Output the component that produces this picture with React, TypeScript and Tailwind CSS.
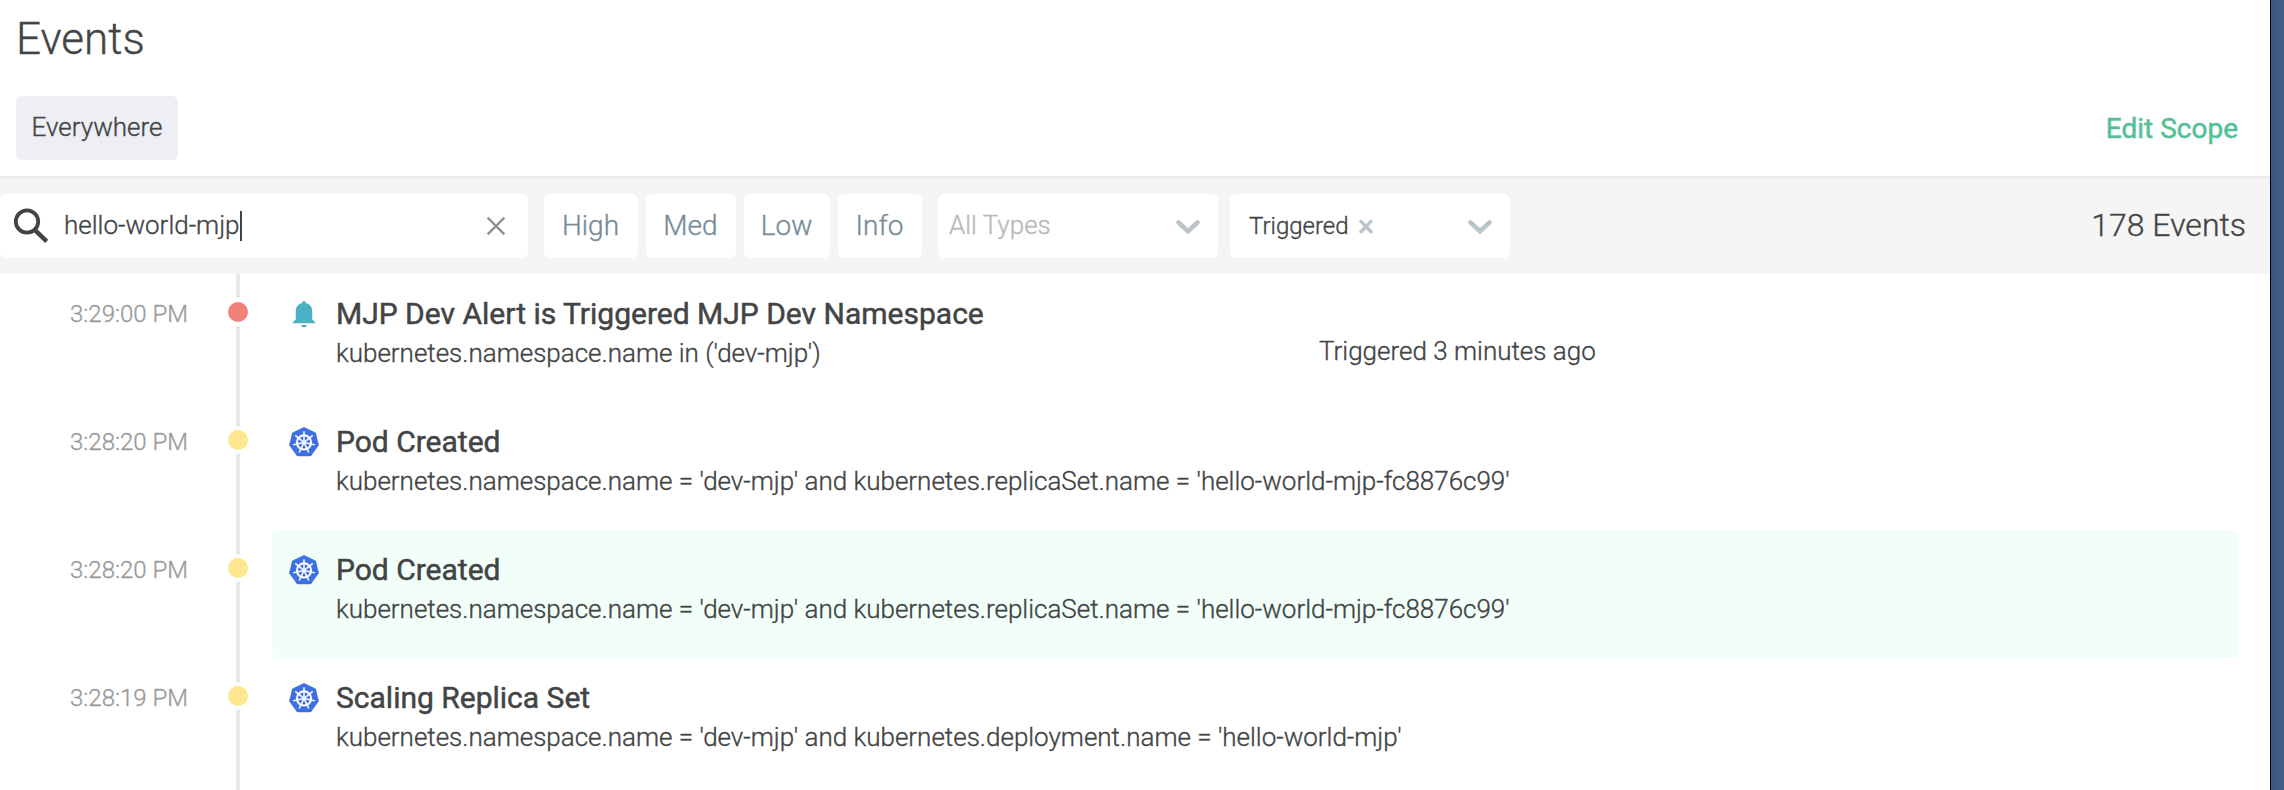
type Severity = "high" | "low";

interface EventItem {
  time: string;
  severity: Severity;
  kind: "alert" | "kubernetes";
  title: string;
  scope: string;
  status?: string;
  highlighted?: boolean;
}

const events: EventItem[] = [
  {
    time: "3:29:00 PM",
    severity: "high",
    kind: "alert",
    title: "MJP Dev Alert is Triggered MJP Dev Namespace",
    scope: "kubernetes.namespace.name in ('dev-mjp')",
    status: "Triggered 3 minutes ago",
  },
  {
    time: "3:28:20 PM",
    severity: "low",
    kind: "kubernetes",
    title: "Pod Created",
    scope:
      "kubernetes.namespace.name = 'dev-mjp' and kubernetes.replicaSet.name = 'hello-world-mjp-fc8876c99'",
  },
  {
    time: "3:28:20 PM",
    severity: "low",
    kind: "kubernetes",
    title: "Pod Created",
    scope:
      "kubernetes.namespace.name = 'dev-mjp' and kubernetes.replicaSet.name = 'hello-world-mjp-fc8876c99'",
    highlighted: true,
  },
  {
    time: "3:28:19 PM",
    severity: "low",
    kind: "kubernetes",
    title: "Scaling Replica Set",
    scope:
      "kubernetes.namespace.name = 'dev-mjp' and kubernetes.deployment.name = 'hello-world-mjp'",
  },
];

const severityFilters = [
  { label: "High", width: "w-[94px]" },
  { label: "Med", width: "w-[90px]" },
  { label: "Low", width: "w-[86px]" },
  { label: "Info", width: "w-[84px]" },
];

function SearchIcon() {
  return (
    <svg className="ml-[13px] size-9 shrink-0" viewBox="0 0 36 36" fill="none" stroke="#424445">
      <circle cx="14" cy="13.5" r="11.2" strokeWidth="3.8" />
      <path d="M22.3 22.3 33.7 33.4" strokeWidth="4.4" />
    </svg>
  );
}

function ClearIcon() {
  return (
    <svg className="mr-[22px] size-5 shrink-0" viewBox="0 0 20 20" fill="none" stroke="#8f9191">
      <path d="M1.6 1.6 18.4 18.4M18.4 1.6 1.6 18.4" strokeWidth="2.3" />
    </svg>
  );
}

function RemoveIcon() {
  return (
    <svg className="ml-[10px] mt-px h-[15px] w-[14px]" viewBox="0 0 14 15" fill="none" stroke="#b9c5cb">
      <path d="M2 2.4 12 12.8M12 2.4 2 12.8" strokeWidth="3.4" strokeLinecap="round" />
    </svg>
  );
}

function ChevronIcon() {
  return (
    <svg className="mr-[18px] mt-[2px] h-[14px] w-6 shrink-0" viewBox="0 0 24 14" fill="none" stroke="#b9c5cb">
      <path d="M2.5 2.5 12 11.2 21.5 2.5" strokeWidth="4.6" strokeLinecap="round" />
    </svg>
  );
}

function BellIcon() {
  return (
    <svg className="mt-[7px] h-[27px] w-6" viewBox="0 0 24 27" fill="#4db1c6">
      <path d="M12 0c1.1 0 1.7.8 1.8 1.9 3.8.8 6.4 3.8 6.4 8v8.3l2.9 3v1H.9v-1l2.9-3V9.9c0-4.2 2.6-7.2 6.4-8C10.3.8 10.9 0 12 0Z" />
      <path d="M9.2 23.9h5.6c-.2 1.5-1.3 2.4-2.8 2.4s-2.6-.9-2.8-2.4Z" />
    </svg>
  );
}

function KubernetesIcon() {
  const spokes = Array.from({ length: 7 }, (_, i) => (i * 360) / 7);
  return (
    <svg className="mt-[5px] size-[30px]" viewBox="0 0 30 30">
      <path
        d="M15 1.2 25.9 6.3 28.8 18 21.4 28.2H8.6L1.2 18 4.1 6.3Z"
        fill="#3f70e0"
        stroke="#3f70e0"
        strokeWidth="2"
        strokeLinejoin="round"
      />
      <g stroke="#fff" fill="none">
        <circle cx="15" cy="15.4" r="7.1" strokeWidth="2" />
        {spokes.map((angle) => (
          <path
            key={angle}
            d="M15 13.8V4.2"
            strokeWidth="1.5"
            transform={`rotate(${angle} 15 15.4)`}
          />
        ))}
        <circle cx="15" cy="15.4" r="1.5" fill="#fff" strokeWidth="1" />
      </g>
    </svg>
  );
}

function Toolbar() {
  return (
    <div className="flex h-[98px] items-center border-t-2 border-[#ececec] bg-[#f5f5f5]">
      <div className="flex h-16 w-[528px] items-center rounded-md bg-white">
        <SearchIcon />
        <div className="ml-[15px] flex flex-1 items-center">
          <span className="-mt-0.5 text-[26px] leading-[30px]">hello-world-mjp</span>
          <span className="h-[30px] w-[2px] bg-[#424445]" />
        </div>
        <ClearIcon />
      </div>
      <div className="ml-4 flex gap-2">
        {severityFilters.map(({ label, width }) => (
          <button
            key={label}
            className={`flex h-16 items-center justify-center rounded-md bg-white pr-px text-[28px] leading-8 text-[#778c98] ${width}`}
          >
            {label}
          </button>
        ))}
      </div>
      <div className="ml-4 flex h-16 w-[280px] items-center justify-between rounded-md bg-white pl-[11px]">
        <span className="-mt-0.5 text-[26px] leading-[30px] text-[#b9b9b9]">All Types</span>
        <ChevronIcon />
      </div>
      <div className="ml-3 flex h-16 w-[280px] items-center justify-between rounded-md bg-white pl-[19px]">
        <div className="flex items-center">
          <span className="text-[24px] leading-7">Triggered</span>
          <RemoveIcon />
        </div>
        <ChevronIcon />
      </div>
      <span className="ml-auto mr-6 -mt-0.5 text-[32px] leading-9">178 Events</span>
    </div>
  );
}

function Timeline({ severity }: { severity: Severity }) {
  return (
    <div className="flex w-5 shrink-0 flex-col items-center">
      <div className="h-6 w-1 bg-[#e3eaeb]" />
      <div
        className={`my-1 size-5 shrink-0 rounded-full ${severity === "high" ? "bg-[#f2807a]" : "bg-[#fce690]"}`}
      />
      <div className="w-1 flex-1 bg-[#e3eaeb]" />
    </div>
  );
}

function EventRow({ event }: { event: EventItem }) {
  return (
    <li className="flex h-32 shrink-0">
      <time className="w-[188px] shrink-0 pt-[26px] text-right text-[24px] leading-7 text-[#999b9c]">
        {event.time}
      </time>
      <div className="ml-10 flex">
        <Timeline severity={event.severity} />
      </div>
      <div
        className={`ml-6 mr-8 flex flex-1 rounded-md pt-5 ${event.highlighted ? "bg-[#f1fff8]" : ""}`}
      >
        <div className="ml-4 flex w-8 shrink-0 justify-center">
          {event.kind === "alert" ? <BellIcon /> : <KubernetesIcon />}
        </div>
        <div className="ml-4 w-[983px]">
          <h2 className="whitespace-nowrap text-[30px] font-normal leading-10 [-webkit-text-stroke-width:0.5px]">
            {event.title}
          </h2>
          <p className="whitespace-nowrap text-[26px] leading-[38px] tracking-[-0.01px]">{event.scope}</p>
        </div>
        {event.status && <p className="mt-10 text-[26px] leading-[34px]">{event.status}</p>}
      </div>
    </li>
  );
}

export default function App() {
  return (
    <div className="flex h-[790px] w-[2284px] overflow-hidden bg-white font-[Roboto,sans-serif] font-light text-[#424445] [-webkit-text-stroke-width:0.35px]">
      <main className="flex w-[2270px] flex-col">
        <h1 className="pl-4 pt-[15px] text-[44px] leading-[48px]">Events</h1>
        <div className="mb-4 mt-[33px] flex items-center justify-between pl-4 pr-8">
          <div className="flex h-16 w-[162px] items-center justify-center rounded-md bg-[#eeeff4]">
            <span className="-mt-0.5 text-[26px] leading-[30px]">Everywhere</span>
          </div>
          <button className="mt-0.5 text-[28px] font-normal leading-8 text-[#55c096] [-webkit-text-stroke-width:0.5px]">
            Edit Scope
          </button>
        </div>
        <Toolbar />
        <ul className="flex flex-1 flex-col overflow-hidden">
          {events.map((event, i) => (
            <EventRow key={i} event={event} />
          ))}
          <li className="flex flex-1 pl-[236px]">
            <div className="w-1 bg-[#e3eaeb]" />
          </li>
        </ul>
      </main>
      <aside className="flex-1 border-l border-black bg-linear-to-r from-[#3b5679] to-[#435f87]" />
    </div>
  );
}
